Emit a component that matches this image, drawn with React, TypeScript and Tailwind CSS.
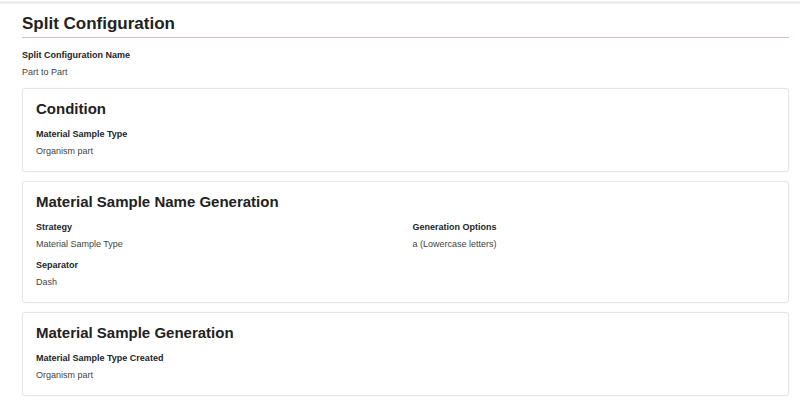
import React from "react";

interface Field {
  label: string;
  value: string;
}

function FieldView({ label, value }: Readonly<Field>) {
  return (
    <div>
      <div className="text-[9px] leading-[14px] font-bold text-[#212529] mb-[3px]">{label}</div>
      <div className="text-[9px] leading-[14px] text-[#444]">{value}</div>
    </div>
  );
}

function Card({ title, children }: Readonly<{ title: string; children: React.ReactNode }>) {
  return (
    <div className="border border-[#e6e6e6] rounded-[3px] shadow-[0_0_2px_rgba(0,0,0,0.05)] px-[13px] pt-[11px] pb-[13px] bg-white">
      <h3 className="text-[15px] leading-[18px] font-bold text-[#222] mb-[9px]">{title}</h3>
      {children}
    </div>
  );
}

export default function App() {
  return (
    <div className="min-h-[403px] bg-white" style={{ fontFamily: '"Liberation Sans", Arial, sans-serif' }}>
      <div className="h-[1px] bg-white" />
      <div className="h-[3px] bg-[#efefef]" />

      <div className="pl-[22px] pr-[11px]">
        <h2 className="pt-[10px] pb-[3px] text-[17px] leading-[20px] font-bold text-[#222] border-b border-[#dcbcc8]">
          Split Configuration
        </h2>

        <div className="mt-[10px]">
          <FieldView label="Split Configuration Name" value="Part to Part" />
        </div>

        <div className="mt-[9px] flex flex-col gap-[9px]">
          <Card title="Condition">
            <FieldView label="Material Sample Type" value="Organism part" />
          </Card>

          <Card title="Material Sample Name Generation">
            <div className="grid grid-cols-2 gap-x-[14px]">
              <div className="flex flex-col gap-[7px]">
                <FieldView label="Strategy" value="Material Sample Type" />
                <FieldView label="Separator" value="Dash" />
              </div>
              <div>
                <FieldView label="Generation Options" value="a (Lowercase letters)" />
              </div>
            </div>
          </Card>

          <Card title="Material Sample Generation">
            <FieldView label="Material Sample Type Created" value="Organism part" />
          </Card>
        </div>
      </div>
    </div>
  );
}
